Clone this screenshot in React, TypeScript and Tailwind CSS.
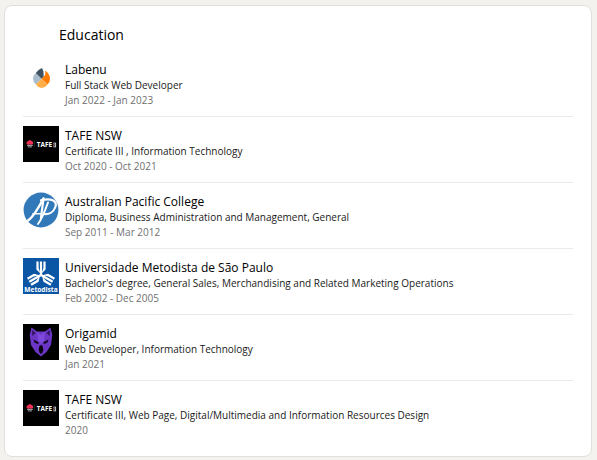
import React from "react";

function LabenuLogo() {
  return (
    <svg viewBox="0 0 36 36" className="size-9" aria-hidden="true">
      <path d="M12.8 13 L18.6 18.8 L13 24.6 Q10 21.8 10 18.6 Q10 15.6 12.8 13Z" fill="#a9bccb" />
      <path d="M12.8 13 Q15.2 9.4 19 8 Q20.6 10.4 20.6 14 L20.6 16.8 L18.6 18.8Z" fill="#40525f" />
      <path d="M18.6 18.8 L22 15.2 Q22.6 13 22.2 10.4 Q27 13.6 27 19 Q27 22.2 24.6 24.6Z" fill="#ff7c05" />
      <path d="M18.6 18.8 L24.6 24.6 Q22.2 27.9 18.6 27.9 Q15.2 27.9 13 24.6Z" fill="#ffae48" />
    </svg>
  );
}

function TafeLogo() {
  return (
    <svg viewBox="0 0 36 36" className="size-9" aria-hidden="true">
      <rect width="36" height="36" fill="#000" />
      <circle cx="5" cy="17" r="1.5" fill="#ef3d5b" />
      <circle cx="8.8" cy="17" r="1.5" fill="#ef3d5b" />
      <path d="M6.9 13.9 L8.8 15 L9.9 16.4 L8.8 18.6 H5 L3.9 16.4 L5 15Z" fill="#ef3054" />
      <path d="M4 19.4 H9.8 M4.9 20.9 H8.9" stroke="#a8a8b0" strokeWidth="1" />
      <path d="M11.5 14 V21" stroke="#3a3a3a" strokeWidth=".5" />
      <text x="13.8" y="21.4" fontSize="6.4" fontWeight="700" fill="#fff" fontFamily="Open Sans, sans-serif">TAFE</text>
      <path d="M30.2 17.2 H32.8 M30.2 19 H32.8 M30.2 20.8 H32.8 M32.6 16.7 V21.3" stroke="#ddd" strokeWidth=".8" />
    </svg>
  );
}

function PacificLogo() {
  return (
    <svg viewBox="0 0 36 36" className="size-9" aria-hidden="true">
      <circle cx="18" cy="18" r="17.4" fill="#3179b8" />
      <g fill="none" stroke="#fff" strokeLinecap="round">
        <path d="M4.5 29 C10.5 25 16 15 20.5 6.5" strokeWidth="2.4" />
        <path d="M20.5 6.5 C19.6 14 18.6 20 18 26" strokeWidth="2.2" />
        <path d="M10 21.8 H18.5" strokeWidth="1.6" />
        <path d="M15 32 C19.5 26 22 19 25 10.5" strokeWidth="2" />
        <path d="M18 8.4 C28 5.5 34.5 9 32.4 15 C30.4 20.6 25.4 22.4 21.5 22" strokeWidth="2.2" />
      </g>
    </svg>
  );
}

function MetodistaLogo() {
  const arm = "M13.4 3.5 L15.6 3.5 V10 L17.4 15.4 L13.4 11.5Z M16.9 3.5 H19.1 V17 H16.9Z M20.4 3.5 H22.6 V11.5 L18.6 15.4 L20.4 10Z";
  return (
    <svg viewBox="0 0 36 36" className="size-9" aria-hidden="true">
      <rect width="36" height="36" fill="#0b55a5" />
      <g fill="#fff">
        <path d={arm} />
        <path d={arm} transform="rotate(120 18 17)" />
        <path d={arm} transform="rotate(240 18 17)" />
      </g>
      <text x="18" y="34" fontSize="6.6" fontWeight="700" textAnchor="middle" fill="#fff" fontFamily="Open Sans, sans-serif">Metodista</text>
    </svg>
  );
}

function OrigamidLogo() {
  return (
    <svg viewBox="0 0 36 36" className="size-9" aria-hidden="true">
      <rect width="36" height="36" fill="#000" />
      <path d="M8.5 3.5 L14 7.5 H22 L27.5 3.5 L29.3 11 L28 21 L23.5 28 L18 32.5 L12.5 28 L8 21 L6.7 11Z" fill="#6b36c6" />
      <path d="M9.3 6 L12.5 9 L9.3 12Z M26.7 6 L23.5 9 L26.7 12Z" fill="#2a1254" />
      <path d="M14 7.5 L18 11 L22 7.5 L21 17 L18 20 L15 17Z" fill="#7e4adb" />
      <path d="M10.5 15.5 L16 18.5 L14.8 20 L11.5 18.6Z M25.5 15.5 L20 18.5 L21.2 20 L24.5 18.6Z" fill="#100620" />
      <path d="M16.4 22 L18 21 L19.6 22 L20.4 26 L19 29.5 H17 L15.6 26Z" fill="#0b0415" />
    </svg>
  );
}

type School = {
  name: string;
  course: string;
  dates: string;
  Logo: () => React.JSX.Element;
};

const schools: School[] = [
  { name: "Labenu", course: "Full Stack Web Developer", dates: "Jan 2022 - Jan 2023", Logo: LabenuLogo },
  { name: "TAFE NSW", course: "Certificate III , Information Technology", dates: "Oct 2020 - Oct 2021", Logo: TafeLogo },
  { name: "Australian Pacific College", course: "Diploma, Business Administration and Management, General", dates: "Sep 2011 - Mar 2012", Logo: PacificLogo },
  { name: "Universidade Metodista de São Paulo", course: "Bachelor's degree, General Sales, Merchandising and Related Marketing Operations", dates: "Feb 2002 - Dec 2005", Logo: MetodistaLogo },
  { name: "Origamid", course: "Web Developer, Information Technology", dates: "Jan 2021", Logo: OrigamidLogo },
  { name: "TAFE NSW", course: "Certificate III, Web Page, Digital/Multimedia and Information Resources Design", dates: "2020", Logo: TafeLogo },
];

export default function App() {
  return (
    <main className="min-h-screen bg-[#f3f2ee] pt-[5px] pr-[5px] pb-[3px] pl-1 font-['Open_Sans','Noto_Sans',sans-serif]">
      <section className="rounded-lg border border-[#e0dfdc] bg-white px-[18px] pt-[19px] pb-[10px]">
        <h2 className="mb-[6px] pl-9 text-[14px] leading-5 font-medium text-black">Education</h2>
        <ul className="divide-y divide-[#ebebeb]">
          {schools.map(({ name, course, dates, Logo }, index) => (
            <li key={index} className="flex gap-[6px] pt-[9px] pb-2">
              <div className="shrink-0">
                <Logo />
              </div>
              <div className="min-w-0 pt-[2px]">
                <h3 className="mb-px text-[12px] leading-[15px] font-medium text-black">{name}</h3>
                <p className="text-[10px] leading-[15px] text-[#191919]">{course}</p>
                <p className="text-[10px] leading-[15px] text-[#707070]">{dates}</p>
              </div>
            </li>
          ))}
        </ul>
      </section>
    </main>
  );
}
